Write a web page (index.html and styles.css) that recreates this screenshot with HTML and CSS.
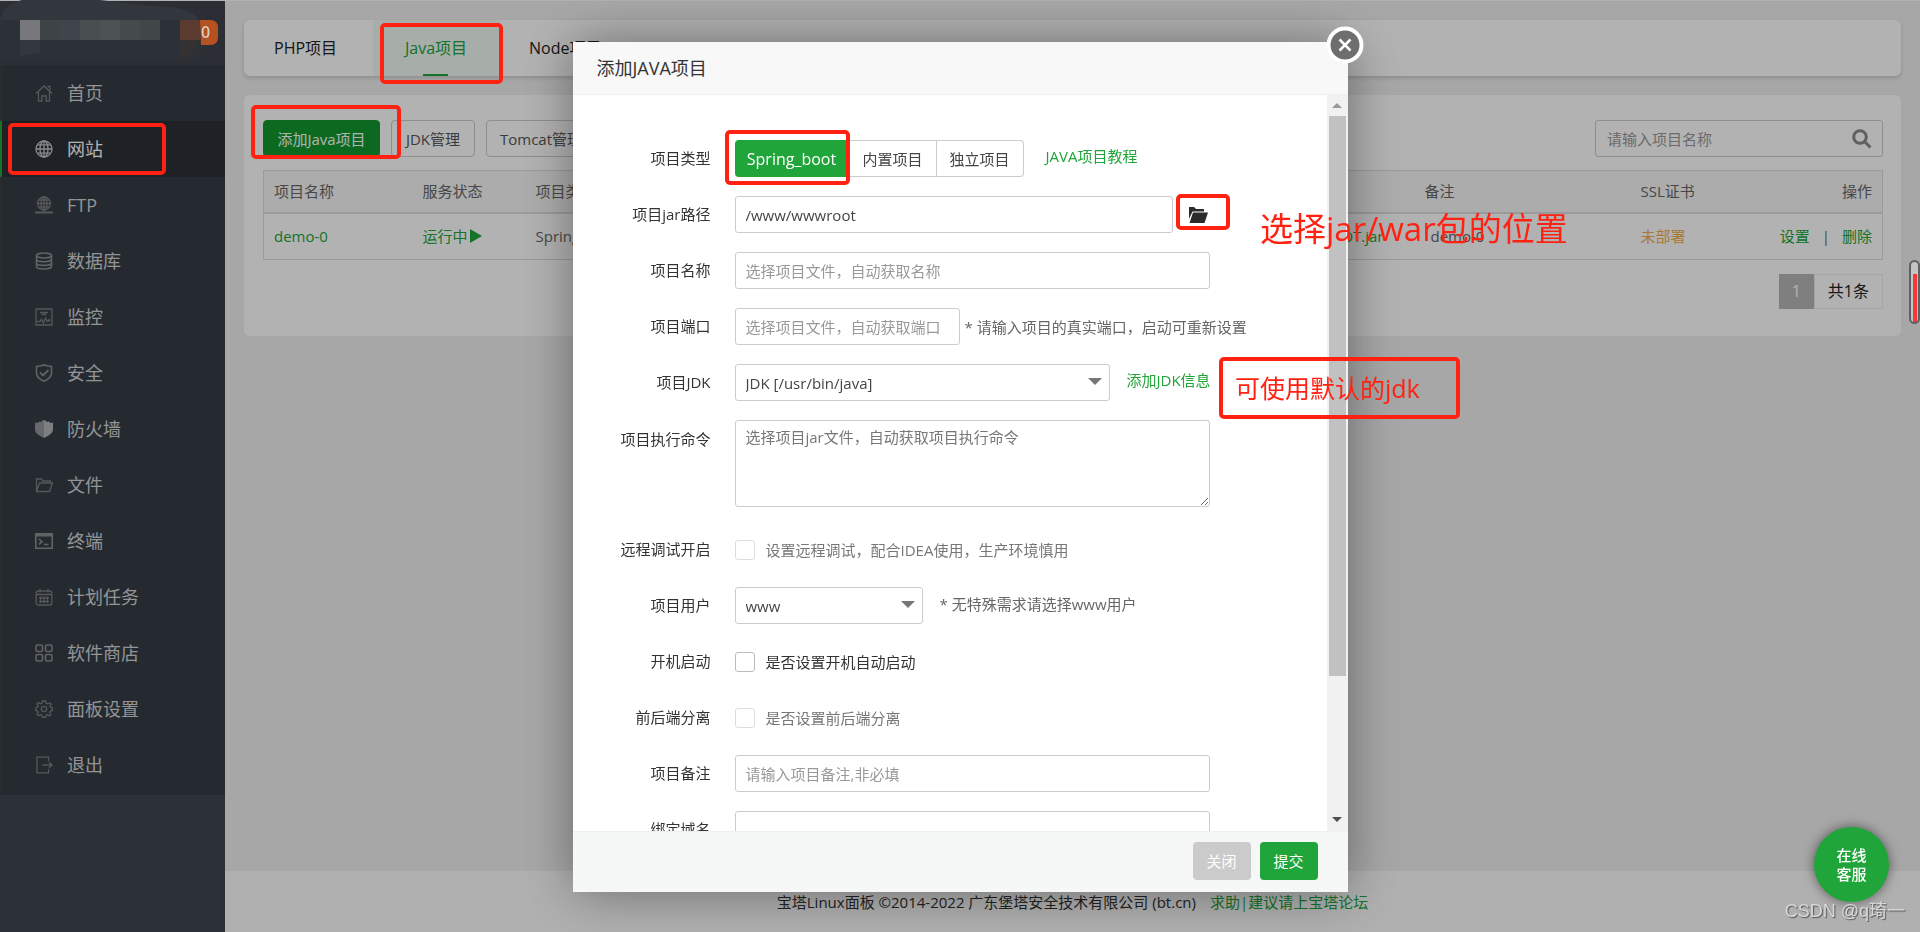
FILE: index.html
```html
<!DOCTYPE html>
<html lang="zh-CN">
<head>
<meta charset="utf-8">
<title>宝塔Linux面板</title>
<link rel="stylesheet" href="styles.css">
</head>
<body>
<div class="app">
  <aside class="sidebar">
    <div class="brand"></div>
    <nav class="menu">
      <a class="menu-item" href="#"><svg class="ico" viewBox="0 0 18 18"><path d="M1 9.5L9 2l8 7.5M3.5 8v9h3.300v-5h4.400v5h3.300V8M12.500 2.500h2.500v4"/></svg>首页</a>
      <a class="menu-item active" href="#"><svg class="ico" viewBox="0 0 18 18"><circle cx="9" cy="9" r="8"/><ellipse cx="9" cy="9" rx="4" ry="8"/><path d="M9 1v16M1 9h16M2.500 4.800h13M2.500 13.200h13"/></svg>网站</a>
      <a class="menu-item" href="#"><svg class="ico" viewBox="0 0 18 18"><circle cx="9" cy="7.500" r="6.500"/><ellipse cx="9" cy="7.500" rx="3" ry="6.500"/><path d="M9 1v15M2.500 7.500h13M4 4h10M4 11h10"/><path d="M0 16.500h18M6.500 16.500h5" stroke-width="2"/></svg>FTP</a>
      <a class="menu-item" href="#"><svg class="ico bold" viewBox="0 0 18 18"><ellipse cx="9" cy="3.500" rx="7.500" ry="2.500"/><path d="M1.500 3.500v11c0 3.300 15 3.300 15 0v-11M1.500 7.200c0 3.300 15 3.300 15 0M1.500 10.900c0 3.300 15 3.300 15 0"/></svg>数据库</a>
      <a class="menu-item" href="#"><svg class="ico" viewBox="0 0 18 18"><path d="M1 1h16v16H1zM5 4.500h8M6.500 6.500h5M2 13.500h3l1.500-2.500 2 4 2-5 1.500 3h1l1-1.500 1 2"/></svg>监控</a>
      <a class="menu-item" href="#"><svg class="ico bold" viewBox="0 0 18 18"><path d="M9 .8C6.500 2.200 4 2.500 1.500 2.500V9c0 4 3.500 6.500 7.500 8.300 4-1.800 7.500-4.300 7.500-8.300V2.500C14 2.500 11.500 2.200 9 .8z"/><path d="M5 8.500l3 3L13.500 6" stroke-width="1.800"/></svg>安全</a>
      <a class="menu-item" href="#"><svg class="ico solid" viewBox="0 0 18 18"><path d="M9 0v18C3.500 15.500 0 13 0 9V2.500l2.500.5 1.500-1.500 2 .5L7.500.5z" opacity=".75"/><path d="M9 0v18c5.500-2.500 9-5 9-9V2.500l-2.500.5L14 1.500l-2 .5L10.500.5z"/></svg>防火墙</a>
      <a class="menu-item" href="#"><svg class="ico" viewBox="0 0 18 18"><path d="M1.500 15.500V3h5l1.500 2h7.500v2M1.500 15.500L4.500 7H17.500l-3 8.500z"/></svg>文件</a>
      <a class="menu-item" href="#"><svg class="ico bold" viewBox="0 0 18 18"><path d="M.8 1.800h16.400v14.400H.8zM4 7l3 2.700L4 12.400M9 12.500h4.500"/><path d="M1 3.300h16" stroke-width="2.500"/></svg>终端</a>
      <a class="menu-item" href="#"><svg class="ico" viewBox="0 0 18 18"><rect x="1.200" y="3" width="15.600" height="14" rx="2"/><path d="M5 .8V4.500M13 .8V4.500M1.500 6.500h15M4 10h10M4 13.500h10M5.500 8.500V15M9 8.500V15M12.500 8.500V15"/></svg>计划任务</a>
      <a class="menu-item" href="#"><svg class="ico bold" viewBox="0 0 18 18"><rect x="1" y="1" width="6.500" height="6.500" rx="1.500"/><rect x="10.500" y="1" width="6.500" height="6.500" rx="1.500"/><rect x="1" y="10.500" width="6.500" height="6.500" rx="1.500"/><rect x="10.500" y="10.500" width="6.500" height="6.500" rx="1.500"/></svg>软件商店</a>
      <a class="menu-item" href="#"><svg class="ico" viewBox="0 0 18 18"><path d="M7.500 1h3l.5 2.200 1.800.8 2-1.200 1.400 1.400L15 6.200l.8 1.300 1.600.3v2.700l-1.800.5-.8 1.500 1.200 2-1.500 1.400-2-1.200-1.500.8-.5 2H7.500l-.5-2.200-1.500-.7-2 1.200L2 14.400l1.200-2-.8-1.500L.8 10.500V7.800l1.800-.5.7-1.400L2 4l1.500-1.400 2 1.200L7 3.200z"/><circle cx="9" cy="9" r="2.600"/></svg>面板设置</a>
      <a class="menu-item" href="#"><svg class="ico" viewBox="0 0 18 18"><path d="M13.500 5V1.200H2v15.600h11.500V13M7.500 9H17M14 6l3 3-3 3"/></svg>退出</a>
    </nav>
  </aside>

  <div class="page">
    <main class="content">
      <nav class="tabs">
        <a class="tab" href="#">PHP项目</a>
        <a class="tab on" href="#">Java项目</a>
        <a class="tab" href="#">Node项目</a>
      </nav>
      <section class="panel">
        <div class="toolbar">
          <button class="btn primary" type="button">添加Java项目</button>
          <button class="btn" type="button">JDK管理</button>
          <button class="btn" type="button">Tomcat管理</button>
          <div class="search">
            <input type="text" aria-label="搜索项目" placeholder="请输入项目名称">
            <button type="button" aria-label="搜索"><svg viewBox="0 0 20 20"><circle cx="8" cy="8" r="6.300"/><path d="M12.500 12.500l6 6"/></svg></button>
          </div>
        </div>
        <table class="grid">
          <colgroup><col class="c-name"><col class="c-state"><col class="c-type"><col><col class="c-note"><col class="c-ssl"><col class="c-op"></colgroup>
          <thead><tr><th>项目名称</th><th>服务状态</th><th>项目类型</th><th></th><th>备注</th><th>SSL证书</th><th class="ops">操作</th></tr></thead>
          <tbody><tr>
            <td><a href="#">demo-0</a></td>
            <td><a class="state" href="#">运行中<svg viewBox="0 0 12 14"><path d="M0 0l12 7-12 7z"/></svg></a></td>
            <td>Spring_boot</td>
            <td class="path"><a href="#">ROOT.jar</a></td>
            <td class="note">demo-0</td>
            <td class="warn">未部署</td>
            <td class="ops"><a href="#">设置</a><span class="bar">|</span><a href="#">删除</a></td>
          </tr></tbody>
        </table>
        <div class="pager"><span class="cur">1</span><span class="total">共1条</span></div>
      </section>
    </main>
    <footer class="foot">宝塔Linux面板 ©2014-2022 广东堡塔安全技术有限公司 (bt.cn)<a href="#">求助|建议请上宝塔论坛</a></footer>
  </div>
</div>

<div class="overlay">
  <div class="modal" role="dialog" aria-labelledby="dlg-title">
    <h2 class="modal-head" id="dlg-title">添加JAVA项目</h2>
    <button class="close" type="button" aria-label="关闭窗口"><svg viewBox="0 0 38 38"><circle cx="19" cy="19" r="16.500"/><path d="M13.500 13.500l11 11M24.500 13.500l-11 11"/></svg></button>
    <div class="modal-body">
      <form class="form" id="java-form">
        <div class="row"><span class="label">项目类型</span>
          <div class="segment"><button class="seg on" type="button">Spring_boot</button><button class="seg" type="button">内置项目</button><button class="seg" type="button">独立项目</button></div>
          <a class="side-link far" href="#">JAVA项目教程</a></div>
        <div class="row"><label class="label" for="f-jar">项目jar路径</label>
          <input class="field w-path" id="f-jar" type="text" value="/www/wwwroot">
          <button class="folder" type="button" aria-label="选择文件"><svg viewBox="0 0 20 16"><path d="M1 0h5l2 2h8v2.500H4.500L1 12z"/><path d="M5 5.500h15L16.500 16H1.500z"/></svg></button></div>
        <div class="row"><label class="label" for="f-name">项目名称</label><input class="field w-full" id="f-name" type="text" placeholder="选择项目文件，自动获取名称"></div>
        <div class="row"><label class="label" for="f-port">项目端口</label><input class="field w-port" id="f-port" type="text" placeholder="选择项目文件，自动获取端口"><span class="hint near">* 请输入项目的真实端口，启动可重新设置</span></div>
        <div class="row"><label class="label" for="f-jdk">项目JDK</label>
          <span class="select w-jdk"><select id="f-jdk"><option>JDK [/usr/bin/java]</option></select></span>
          <a class="side-link" href="#">添加JDK信息</a></div>
        <div class="row tall"><label class="label" for="f-cmd">项目执行命令</label><textarea class="field w-full" id="f-cmd" placeholder="选择项目jar文件，自动获取项目执行命令"></textarea></div>
        <div class="row"><span class="label">远程调试开启</span><label class="check off"><input type="checkbox" disabled>设置远程调试，配合IDEA使用，生产环境慎用</label></div>
        <div class="row"><label class="label" for="f-user">项目用户</label>
          <span class="select w-user"><select id="f-user"><option>www</option></select></span>
          <span class="hint">* 无特殊需求请选择www用户</span></div>
        <div class="row"><span class="label">开机启动</span><label class="check"><input type="checkbox">是否设置开机自动启动</label></div>
        <div class="row"><span class="label">前后端分离</span><label class="check off"><input type="checkbox" disabled>是否设置前后端分离</label></div>
        <div class="row"><label class="label" for="f-note">项目备注</label><input class="field w-full" id="f-note" type="text" placeholder="请输入项目备注,非必填"></div>
        <div class="row"><label class="label" for="f-host">绑定域名</label><input class="field w-full" id="f-host" type="text"></div>
      </form>
      <div class="scroll"><i class="up"></i><div class="track"><div class="thumb"></div></div><i class="down"></i></div>
    </div>
    <div class="modal-foot"><button class="act cancel" type="button">关闭</button><button class="act submit" type="submit" form="java-form">提交</button></div>
  </div>
</div>

<svg class="mosaic" viewBox="0 0 225 65" aria-hidden="true">
  <path fill="#32373d" d="M0 20Q3 4 22 0h78l50 6q50 0 50 20v34H0z"/>
  <path fill="#2c3137" d="M0 20h200v40H0z"/>
  <path fill="#b6521f" d="M200 20h10q8 0 8 8v9q0 8-8 8h-9z"/>
  <path fill="#78787c" d="M20 20h20v20H20z"/><path fill="#3e4346" d="M40 20h20v20H40z"/><path fill="#40454c" d="M60 20h20v20H60z"/>
  <path fill="#494e51" d="M80 20h20v20H80z"/><path fill="#4d5255" d="M100 20h20v20h-20z"/><path fill="#454a4d" d="M120 20h20v20h-20z"/><path fill="#414648" d="M140 20h20v20h-20z"/>
  <path fill="#33373f" d="M20 40h20v13l-20 3z"/><path fill="#5b3b30" d="M180 20h20v20h-20z"/><path fill="#333131" d="M180 40h20q-5 14-20 19z"/>
</svg>
<span class="badge">0</span>
<div class="mark m-tab"></div><div class="mark m-site"></div><div class="mark m-add"></div>
<div class="mark m-spring"></div><div class="mark m-folder"></div><div class="mark m-jdk"></div>
<p class="remark r-jar">选择jar/war包的位置</p>
<p class="remark r-jdk">可使用默认的jdk</p>
<div class="gauge"></div>
<button class="service" type="button">在线<br>客服</button>
<span class="watermark">CSDN @q琦一</span>
</body>
</html>
```
FILE: styles.css
```css
* { box-sizing: border-box; }
body {
  margin: 0;
  color: #333;
  background: #f0f0f0;
  font: 15px/20px "Open Sans", "Noto Sans CJK SC", sans-serif;
  overflow: hidden;
}
a { color: #20a53a; text-decoration: none; }
button, input, select, textarea { font: inherit; color: inherit; }
button { padding: 0; border: 0; background: none; }

.app { display: flex; min-height: 100vh; border-top: 1px solid #fff; }
.sidebar { width: 225px; flex: none; background: #40454f; }
.brand { height: 64px; background: #3e444c; }
.menu { padding-bottom: 2px; background: #363d45; }
.menu-item {
  display: flex; align-items: center; gap: 14px;
  height: 56px; padding-left: 33px;
  border-left: 2px solid #3b3f41;
  color: #d2d4d6; font-size: 18px;
}
.menu-item.active { background: #2c3036; border-color: #20a53a; color: #fff; }
.ico { width: 18px; height: 18px; fill: none; stroke: #7b7e81; stroke-width: 1.3; }
.ico.bold { stroke: #8b8e90; stroke-width: 1.6; }
.active .ico { stroke: #c4c6c8; }
.ico.solid { fill: #b4b6b8; stroke: none; }

.page { flex: 1; min-width: 0; display: flex; flex-direction: column; }
.content { flex: 1; padding: 19px 19px 0; }
.tabs { display: flex; height: 56px; border-radius: 6px; background: #fff; box-shadow: 0 2px 4px rgba(0,0,0,.16); }
.tab { display: flex; align-items: center; padding: 0 30px; font-size: 16px; color: #222; }
.tab.on { position: relative; justify-content: center; min-width: 126px; margin-left: 6px; color: #20a53a; background: #eff8f3; }
.tab.on::after { content: ""; position: absolute; left: 50px; right: 51px; bottom: 0; height: 2px; background: #20a53a; }
.panel { margin-top: 19px; padding: 25px 18px 27px 19px; border-radius: 6px; background: #fff; }
.toolbar { display: flex; gap: 11px; margin-bottom: 13px; }
.btn { min-width: 84px; height: 37px; padding: 0 13px; border: 1px solid #ccc; border-radius: 4px; color: #555; }
.btn.primary { min-width: 117px; padding: 0; background: #10982d; border-color: #10982d; color: #fff; }
.search { display: flex; width: 288px; margin-left: auto; border: 1px solid #ccc; border-radius: 3px; }
.search input { flex: 1; min-width: 0; padding: 0 11px; border: 0; background: none; }
.search button { width: 40px; }
.search svg { width: 20px; height: 20px; fill: none; stroke: #888; stroke-width: 3; vertical-align: middle; }
input::placeholder, textarea::placeholder { color: #999; opacity: 1; }
.grid { width: 100%; table-layout: fixed; border-collapse: collapse; border: 1px solid #ddd; color: #666; }
.grid th, .grid td { padding: 0 10px; text-align: left; font-weight: 400; }
.grid th { height: 42px; background: #f7f7f7; border-bottom: 2px solid #ddd; }
.grid td { height: 47px; }
.c-name { width: 149px; } .c-state { width: 113px; } .c-type { width: 200px; }
.c-note { width: 216px; } .c-ssl { width: 118px; } .c-op { width: 134px; }
.grid .ops { text-align: right; white-space: nowrap; }
.grid .path { padding-right: 31px; text-align: right; }
.grid .note { padding-left: 16px; }
.grid .warn { color: #f0ad4e; }
.state svg { width: 12px; height: 14px; margin-left: 2px; vertical-align: -1px; fill: #20a53a; }
.bar { padding: 0 12px; }
.pager { display: flex; justify-content: flex-end; margin-top: 14px; color: #222; line-height: 33px; }
.pager span { border: 1px solid #ececec; font-size: 16px; }
.pager .cur { width: 35px; background: #b7b7b7; border-color: #b7b7b7; color: #fff; text-align: center; }
.pager .total { padding: 0 13px; }
.foot { height: 61px; display: flex; align-items: center; justify-content: center; gap: 14px; background: #fdfdfd; }

.overlay { position: fixed; inset: 0; display: flex; align-items: center; justify-content: center; padding-top: 2px; background: rgba(0,0,0,.3); }
.modal { position: relative; display: flex; flex-direction: column; width: 775px; height: calc(100vh - 82px); background: #fff; box-shadow: 1px 1px 50px rgba(0,0,0,.4); }
.modal-head { flex: none; margin: 0; padding: 0 24px; border-bottom: 1px solid #eee; background: #f8f8f8; font-size: 18px; font-weight: 400; line-height: 52px; }
.close { position: absolute; top: -16px; right: -16px; width: 38px; height: 38px; }
.close svg { display: block; fill: #6e6e6e; stroke: #fff; stroke-width: 4; }
.close path { stroke-width: 2.5; }
.modal-body { flex: 1; min-height: 0; display: flex; }
.form { flex: 1; min-width: 0; padding: 45px 0 0; display: flex; flex-direction: column; gap: 19px; overflow: hidden; }
.row { flex: none; display: flex; align-items: center; height: 37px; }
.row.tall { height: 92px; align-items: flex-start; }
.label { width: 138px; margin-right: 24px; flex: none; text-align: right; line-height: 39px; }
.field { height: 37px; padding: 0 10px; border: 1px solid #ccc; border-radius: 3px; background: #fff; color: #444; }
textarea.field { height: 87px; padding: 6px 10px; resize: both; }
textarea.field::placeholder { color: #777; }
.w-path { width: 438px; } .w-full { width: 475px; } .w-port { width: 225px; }
.w-jdk { width: 375px; } .w-user { width: 188px; }
.segment { display: flex; height: 37px; }
.seg { min-width: 87px; padding: 0 12px; border: 1px solid #ccc; border-left: 0; color: #444; }
.seg:last-child { border-radius: 0 4px 4px 0; }
.seg.on { min-width: 115px; background: #20a53a; border-color: #20a53a; border-radius: 4px 0 0 4px; color: #fff; font-size: 16px; }
.side-link { margin-left: 17px; padding-bottom: 5px; white-space: nowrap; }
.side-link.far { margin-left: 22px; }
.folder { margin-left: 15px; width: 20px; height: 16px; }
.folder svg { display: block; width: 20px; height: 16px; fill: #2b2b2b; }
.hint { margin-left: 17px; padding-bottom: 4px; color: #666; white-space: nowrap; }
.hint.near { margin-left: 5px; padding: 0; }
.select { position: relative; height: 37px; }
.select select { width: 100%; height: 100%; padding: 0 10px; border: 1px solid #ccc; border-radius: 3px; background: #fff; color: #444; appearance: none; }
.select::after { content: ""; position: absolute; right: 8px; top: 14px; border: 7px solid transparent; border-top-color: #777; border-bottom: 0; }
.check { display: flex; align-items: center; gap: 11px; }
.check.off { color: #777; }
.check input { width: 20px; height: 20px; margin: 0; border: 1px solid #bbb; border-radius: 3px; background: #fff; appearance: none; }
.check.off input { border-color: #ddd; }
.scroll { display: flex; flex-direction: column; align-items: center; justify-content: space-between; width: 21px; padding: 8px 0 9px; background: #f1f1f1; }
.scroll i { border: 5px solid transparent; }
.scroll .up { border-top: 0; border-bottom-color: #999; }
.scroll .down { border-bottom: 0; border-top-color: #505050; }
.track { flex: 1; width: 17px; margin: 8px 0 10px; }
.thumb { height: 81%; background: #c1c1c1; }
.modal-foot { flex: none; display: flex; justify-content: flex-end; gap: 9px; height: 61px; padding: 10px 30px; border-top: 1px solid #edf0f0; background: #f6f8f8; }
.act { width: 58px; height: 38px; border-radius: 4px; color: #fff; }
.cancel { background: #cbcbcb; }
.submit { background: #20a53a; }

.mosaic { position: absolute; left: 0; top: 0; width: 225px; height: 65px; }
.badge { position: absolute; left: 201px; top: 22px; color: #d8cbc4; font-size: 16px; font-weight: 600; }
.mark { position: absolute; border: 4px solid #ff2213; border-radius: 5px; }
.m-tab { left: 380px; top: 23px; width: 123px; height: 61px; }
.m-site { left: 8px; top: 123px; width: 158px; height: 52px; }
.m-add { left: 251px; top: 105px; width: 150px; height: 54px; }
.m-spring { left: 725px; top: 130px; width: 125px; height: 55px; }
.m-folder { left: 1176px; top: 194px; width: 54px; height: 36px; }
.m-jdk { left: 1219px; top: 357px; width: 241px; height: 62px; }
.remark { position: absolute; margin: 0; color: #ff2213; white-space: nowrap; }
.r-jar { left: 1260px; top: 209px; font-size: 33px; line-height: 40px; }
.r-jdk { left: 1235px; top: 370px; font-size: 25px; line-height: 36px; }
.gauge { position: absolute; right: 0; top: 260px; width: 11px; height: 64px; border: 2px solid #606060; border-radius: 6px; background: linear-gradient(#c4c4c4 12px, #f5383a 12px) center / 4px 100% no-repeat #c4c4c4; }
.service { position: absolute; right: 31px; bottom: 30px; width: 75px; height: 75px; border-radius: 50%; background: #20a53a; box-shadow: 0 0 12px rgba(0,0,0,.5); color: #fff; font-weight: 500; line-height: 19px; }
.watermark { position: absolute; right: 15px; bottom: 8px; color: #d8d8d8; font: 18px/26px "Liberation Sans", "Noto Sans CJK SC", sans-serif; text-shadow: 1px 1px 1px #555; white-space: nowrap; }
```
